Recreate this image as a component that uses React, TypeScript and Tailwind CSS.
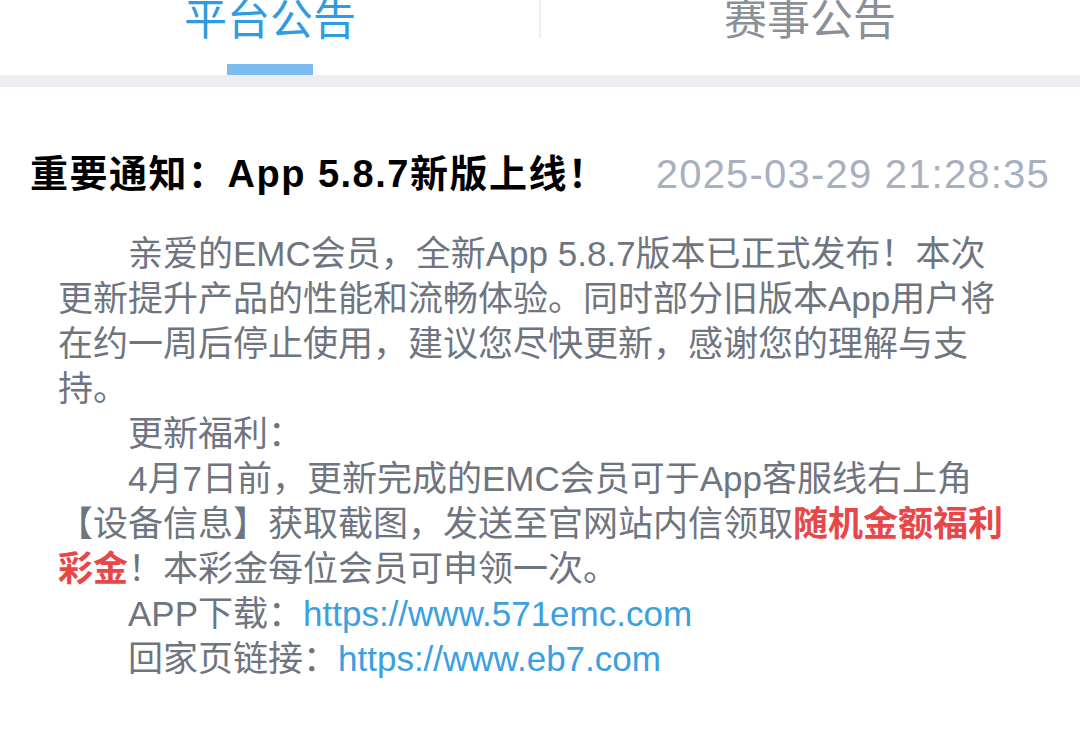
const font = { fontFamily: '"Liberation Sans", "Noto Sans CJK SC", sans-serif' }

const Tab = ({ label, active }: { label: string; active?: boolean }) => (
    <div className="flex-1 flex flex-col items-center">
        <div className={"text-[43px] leading-[48px] -mt-[4px] " + (active ? "text-[#2f9be0]" : "text-[#8a8f98]")}>
            {label}
        </div>
        <div className={"mt-[20px] h-[11px] w-[86px] " + (active ? "bg-[#7bbcf0]" : "bg-transparent")}></div>
    </div>
)

export default function App() {
    return (
        <div className="w-[1080px] h-[740px] bg-white overflow-hidden" style={font}>
            <div className="relative flex">
                <Tab label="平台公告" active />
                <Tab label="赛事公告" />
                <div className="absolute left-[539px] top-0 h-[38px] w-[2px] bg-[#eceef0]"></div>
            </div>
            <div className="h-[12px] bg-[#eceef2]"></div>

            <div className="flex items-center justify-between pl-[30px] pr-[30px] mt-[63px]">
                <div className="text-[38px] leading-[48px] tracking-[1.5px] font-bold text-black">重要通知：App 5.8.7新版上线！</div>
                <div className="text-[40px] leading-[48px] tracking-[1.2px] text-[#a8b0bf]">2025-03-29 21:28:35</div>
            </div>

            <div className="pl-[58px] mt-[33px] text-[35px] leading-[45px] text-[#6e7580] whitespace-nowrap">
                <div className="pl-[70px]">亲爱的EMC会员，全新App 5.8.7版本已正式发布！本次</div>
                <div>更新提升产品的性能和流畅体验。同时部分旧版本App用户将</div>
                <div>在约一周后停止使用，建议您尽快更新，感谢您的理解与支</div>
                <div>持。</div>
                <div className="pl-[70px]">更新福利：</div>
                <div className="pl-[70px]">4月7日前，更新完成的EMC会员可于App客服线右上角</div>
                <div>【设备信息】获取截图，发送至官网站内信领取<span className="font-bold text-[#e8474a]">随机金额福利</span></div>
                <div><span className="font-bold text-[#e8474a]">彩金</span>！本彩金每位会员可申领一次。</div>
                <div className="pl-[70px]">APP下载：<span className="text-[#3aa0e0]">https://www.571emc.com</span></div>
                <div className="pl-[70px]">回家页链接：<span className="text-[#3aa0e0]">https://www.eb7.com</span></div>
            </div>
        </div>
    )
}
